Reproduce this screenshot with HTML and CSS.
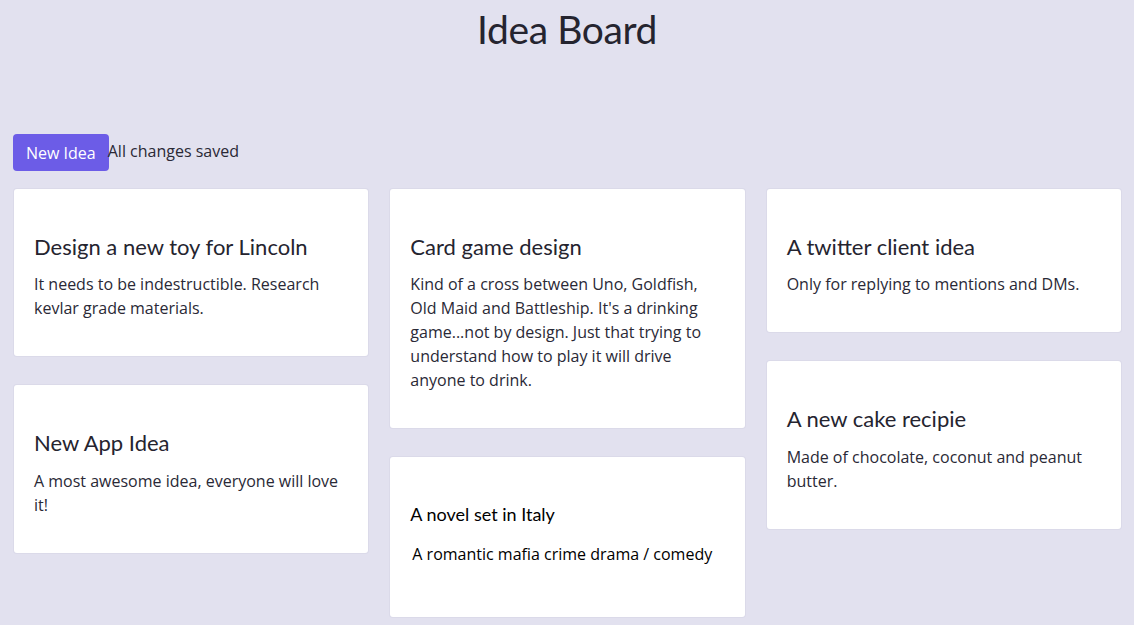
FILE: index.html
```html
<!DOCTYPE html>
<html lang="en">
<head>
<meta charset="utf-8">
<title>Idea Board</title>
<link rel="stylesheet" href="styles.css">
</head>
<body>
<header class="header">
  <h1 class="title">Idea Board</h1>
</header>
<main class="board">
  <div class="toolbar">
    <button class="btn-new">New Idea</button>
    <span class="status">All changes saved</span>
  </div>
  <div class="columns">
    <div class="column">
      <div class="card">
        <h2 class="card-title">Design a new toy for Lincoln</h2>
        <p class="card-body">It needs to be indestructible. Research kevlar grade materials.</p>
      </div>
      <div class="card">
        <h2 class="card-title">New App Idea</h2>
        <p class="card-body">A most awesome idea, everyone will love it!</p>
      </div>
    </div>
    <div class="column">
      <div class="card">
        <h2 class="card-title">Card game design</h2>
        <p class="card-body">Kind of a cross between Uno, Goldfish, Old Maid and Battleship. It's a drinking game...not by design. Just that trying to understand how to play it will drive anyone to drink.</p>
      </div>
      <div class="card card-editing">
        <h2 class="card-title card-title-edit">A novel set in Italy</h2>
        <p class="card-body card-body-edit">A romantic mafia crime drama / comedy</p>
      </div>
    </div>
    <div class="column">
      <div class="card">
        <h2 class="card-title">A twitter client idea</h2>
        <p class="card-body">Only for replying to mentions and DMs.</p>
      </div>
      <div class="card">
        <h2 class="card-title">A new cake recipie</h2>
        <p class="card-body">Made of chocolate, coconut and peanut butter.</p>
      </div>
    </div>
  </div>
</main>
</body>
</html>
```

FILE: styles.css
```css
* {
  box-sizing: border-box;
}

html, body {
  margin: 0;
  padding: 0;
}

body {
  background: #e2e1ef;
  color: #2a2936;
  font-family: "Open Sans", "Noto Sans", sans-serif;
  font-size: 16px;
  line-height: 24px;
  height: 625px;
  overflow: hidden;
}

.header {
  padding-top: 5px;
  text-align: center;
}

.title {
  margin: 0;
  font-family: Lato, "Noto Sans", sans-serif;
  font-weight: 400;
  font-size: 39px;
  letter-spacing: -0.4px;
  line-height: 48px;
  color: #25242f;
}

.board {
  padding: 0 13px;
}

.toolbar {
  display: flex;
  align-items: center;
  margin-top: 81px;
}

.btn-new {
  background: #6c5ce7;
  color: #ffffff;
  border: none;
  border-radius: 4px;
  font-family: "Open Sans", sans-serif;
  font-size: 16px;
  line-height: 24px;
  padding: 6.5px 13px;
  margin: 0;
}

.status {
  color: #2a2936;
  margin-left: -1px;
  margin-bottom: 3px;
}

.columns {
  display: flex;
  gap: 22px;
  margin-top: 18px;
  padding-left: 1px;
  align-items: flex-start;
}

.column {
  flex: 1 1 0;
  min-width: 0;
  display: flex;
  flex-direction: column;
  gap: 29px;
}

.card {
  background: #ffffff;
  border-radius: 3px;
  padding: 20px;
  box-shadow: 0 0 0 1px rgba(60, 60, 110, 0.04);
}

.card-title {
  margin: 25px 0 12px;
  font-family: Lato, "Noto Sans", sans-serif;
  font-weight: 400;
  font-size: 22px;
  line-height: 26.4px;
  color: #25242f;
}

.card-body {
  margin: 0 0 16px;
  color: #2a2936;
}

.card-title-edit {
  font-size: 18px;
  line-height: 21.6px;
  margin: 27px 0 16px;
  color: #000000;
}

.card-body-edit {
  margin: 0 0 31px 2px;
  color: #000000;
}
```
